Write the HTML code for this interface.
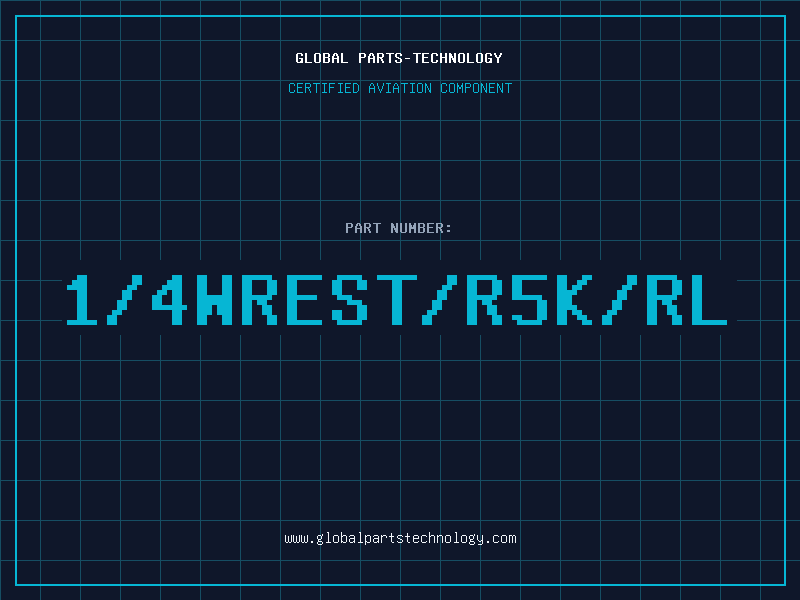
<!DOCTYPE html>
<html>
<head>
<meta charset="utf-8">
<style>
html,body{margin:0;padding:0;width:800px;height:600px;overflow:hidden;background:#0f172a}
body{position:relative;font-family:Unifont,monospace}
.grid{position:absolute;left:0;top:0;width:800px;height:600px;
background-image:linear-gradient(to right,#164e63 1px,transparent 1px),linear-gradient(to bottom,#164e63 1px,transparent 1px);
background-size:40px 40px}
.border{position:absolute;left:15px;top:15px;width:767px;height:567px;border:2px solid #06b6d4}
.t{position:absolute;white-space:pre;font-size:16px;line-height:16px}
.box{position:absolute;left:62px;top:260px;width:675px;height:75px;background:#0f172a}
.big{position:absolute;left:57px;top:260px;height:75px;line-height:71px;font-size:80px;letter-spacing:5px;color:#06b6d4;white-space:pre;text-shadow:5px 0 0 #06b6d4}
</style>
</head>
<body>
<div class="grid"></div>
<div class="border"></div>
<div class="t" style="left:295px;top:49px;letter-spacing:1px;color:#ffffff;text-shadow:1px 0 0 #ffffff">GLOBAL PARTS-TECHNOLOGY</div>
<div class="t" style="left:288px;top:79px;color:#06b6d4">CERTIFIED AVIATION COMPONENT</div>
<div class="t" style="left:345px;top:219px;letter-spacing:1px;color:#94a3b8;text-shadow:1px 0 0 #94a3b8">PART NUMBER:</div>
<div class="box"></div>
<div class="big">1/4WREST/R5K/RL</div>
<div class="t" style="left:284px;top:529px;color:#f1f5f9">www.globalpartstechnology.com</div>
</body>
</html>
